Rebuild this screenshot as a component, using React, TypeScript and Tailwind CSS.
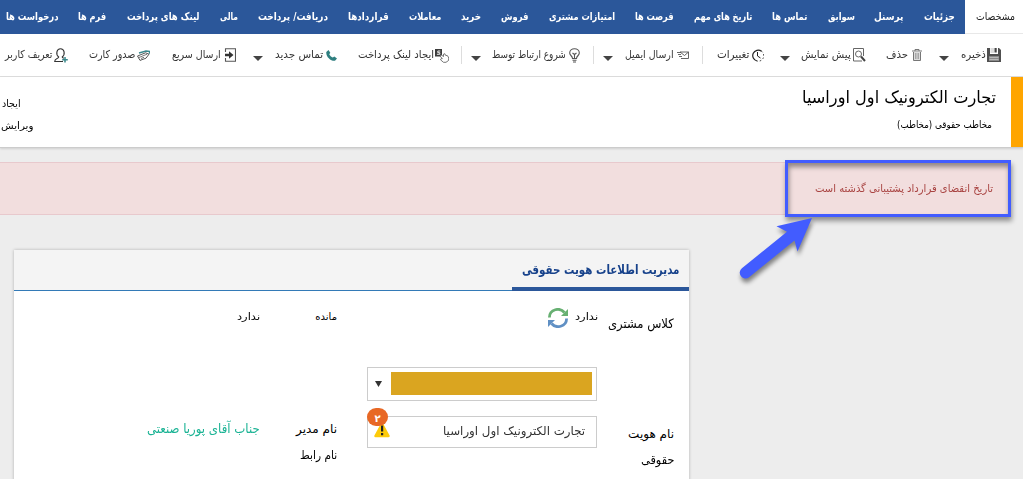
import { useLayoutEffect, useRef, useState, type ReactNode } from "react";

/** Single line of text, condensed horizontally to fill the width of its box. */
function Fit({ children, className = "" }: { children: ReactNode; className?: string }) {
  const box = useRef<HTMLSpanElement>(null);
  const inner = useRef<HTMLSpanElement>(null);
  const [scale, setScale] = useState(1);
  useLayoutEffect(() => {
    if (box.current && inner.current && inner.current.offsetWidth > 0) {
      setScale(box.current.clientWidth / inner.current.offsetWidth);
    }
  }, [children]);
  return (
    <span ref={box} className={`block shrink-0 whitespace-nowrap ${className}`}>
      <span ref={inner} className="inline-block origin-right" style={{ transform: `scaleX(${scale})` }}>
        {children}
      </span>
    </span>
  );
}

const tabs: [string, string][] = [
  ["جزئیات", "w-[31px]"],
  ["پرسنل", "w-[29px]"],
  ["سوابق", "w-[27px]"],
  ["تماس ها", "w-[35px]"],
  ["تاریخ های مهم", "w-[58px]"],
  ["فرصت ها", "w-[39px]"],
  ["امتیازات مشتری", "w-[66px]"],
  ["فروش", "w-[27px]"],
  ["خرید", "w-[20px]"],
  ["معاملات", "w-[32px]"],
  ["قراردادها", "w-[41px]"],
  ["دریافت/ پرداخت", "w-[70px]"],
  ["مالی", "w-[18px]"],
  ["لینک های پرداخت", "w-[73px]"],
  ["فرم ها", "w-[28px]"],
  ["درخواست ها", "w-[53px]"],
];

const SaveIcon = () => (
  <svg className="h-[14px] w-[14px] shrink-0" viewBox="0 0 14 14">
    <path d="M0 0h3v6h8V0h1l2 2v12H0z" fill="#505050" />
    <path d="M3.500 0H7v5H3.500z" fill="#ddd" />
    <path d="M7.500 0h2.200v4.500H7.500z" fill="#444" />
    <path d="M2 8h10v5H2z" fill="#8a8a8a" />
    <path d="M2.500 9.500h9M2.500 11.500h9" stroke="#c4c4c4" strokeWidth=".8" />
  </svg>
);
const TrashIcon = () => (
  <svg className="h-[12px] w-[10px] shrink-0" viewBox="0 0 10 12" fill="none" stroke="#777">
    <path d="M1.500 3v8.500h7V3" fill="#ddd" />
    <path d="M0 2h10M3 2V.5h4V2" />
    <path d="M3.500 4v6M5 4v6M6.500 4v6" stroke="#999" strokeWidth=".8" />
  </svg>
);
const PreviewIcon = () => (
  <svg className="h-[14px] w-[14px] shrink-0" viewBox="0 0 14 14" fill="none" stroke="#666">
    <path d="M11.500 8V.5H1.500v12.500H10" />
    <circle cx="6.500" cy="6" r="3" />
    <path d="m9 8.500 4 4.500" stroke="#444" strokeWidth="2" />
  </svg>
);
const ClockIcon = () => (
  <svg className="h-[13px] w-[12px] shrink-0" viewBox="0 0 12 13" fill="none" stroke="#222">
    <path d="M5 12A5.500 5.500 0 1 1 9.500 2.200" strokeWidth="1.200" />
    <path d="M9.500 2.200A5.500 5.500 0 0 1 5 12" strokeDasharray="1.500 2" />
    <path d="M5.500 3v4l3 2" />
  </svg>
);
const MailIcon = () => (
  <svg className="h-[8px] w-[12px] shrink-0" viewBox="0 0 12 8" fill="none" stroke="#555" strokeWidth=".9">
    <path d="M3 1h8.500v6.500H4M3 1l4.500 3.500L11.500 1M0 1.500h4M1 3.500h3M2 5.500h3" />
  </svg>
);
const BulbIcon = () => (
  <svg className="h-[15px] w-[11px] shrink-0" viewBox="0 0 11 15" fill="none" stroke="#555" strokeWidth="1.100">
    <path d="M3.500 10.500C3.500 8 .7 7.500.7 5a4.800 4.300 0 0 1 9.600 0c0 2.500-2.800 3-2.800 5.500zM3.500 12.300h4M4 14h3M3.500 5l2 1.500 2-1.500M5.500 6.500v4" />
  </svg>
);
const LinkPayIcon = () => (
  <svg className="h-[15px] w-[14px] shrink-0" viewBox="0 0 14 15" fill="none">
    <path d="M0 1h7v7.500H0z" fill="#3c3c3c" />
    <path d="M5.300 3H2.800v1.700h2v1.600H1.900" stroke="#fff" strokeWidth=".9" />
    <path d="m5 8 1-1.200 2.500 1.700V6.200l1.300-.5.7 1.600 2 .4 1.300 2.300-.3 2.500L11 14.300H8.500L5.500 11.800l.6-1.100h1.200z" fill="#fff" stroke="#555" strokeWidth=".8" />
  </svg>
);
const PhoneIcon = () => (
  <svg className="h-[11px] w-[11px] shrink-0" viewBox="0 0 11 11">
    <path d="M2.500 0 4.300 2.700 3.300 4.200c.6 1.500 2 2.800 3.500 3.400l1.500-1L11 8.500 9 10.800C4.500 11.200-.2 6.500.3 2z" fill="#2f7f80" />
  </svg>
);
const SendIcon = () => (
  <svg className="h-[14px] w-[12px] shrink-0" viewBox="0 0 12 14" fill="none">
    <path d="M1.500 4V.7h10v12.600h-10V10" stroke="#555" strokeWidth="1.100" />
    <path d="M1 5.700h4V3.200L9.500 7 5 10.800V8.300H1z" fill="#333" />
  </svg>
);
const CardIcon = () => (
  <svg className="h-[11px] w-[13px] shrink-0" viewBox="0 0 13 11" fill="none" strokeWidth=".9">
    <path d="m2 3 7-2 3.500.3v2.500" stroke="#39878b" strokeWidth="1.400" />
    <path d="m.5 6 8-3.200 3.500 1.400-3 4-6 2.200z" fill="#fff" stroke="#444" />
    <path d="m1.500 7.700 8.500-3.500M4 8.500l3-1.200" stroke="#666" />
  </svg>
);
const UserIcon = () => (
  <svg className="h-[15px] w-[14px] shrink-0" viewBox="0 0 14 15" fill="none">
    <path d="M9 13.500H.7c0-3.500 4-2.500 4-4.500C1.500 6.500 2.500.8 6.500.8s5 5.700 1.700 8.200c0 .8.800 1 1.700 1.300" stroke="#333" strokeWidth="1.100" />
    <path d="M11 9v5.500M8.200 11.700h5.600" stroke="#39878b" strokeWidth="1.500" />
  </svg>
);

const Caret = ({ className }: { className: string }) => (
  <svg className={`mt-[7px] h-[5px] w-[10px] shrink-0 ${className}`} viewBox="0 0 10 5">
    <path d="M0 0h10L5 5z" fill="#444" />
  </svg>
);
const Sep = ({ className }: { className: string }) => (
  <span className={`h-[18px] w-px shrink-0 bg-[#ddd] ${className}`} />
);

function Tool({ icon, label, gap, inner, width }: { icon: ReactNode; label: string; gap: string; inner: string; width: string }) {
  return (
    <div className={`flex shrink-0 items-center ${gap} ${inner}`}>
      {icon}
      <Fit className={`${width} text-[11px] leading-[18px]`}>{label}</Fit>
    </div>
  );
}

function Toolbar() {
  return (
    <div className="flex h-[43px] shrink-0 items-center border-b border-[#ddd] bg-white text-[#333]">
      <Tool icon={<SaveIcon />} label="ذخیره" gap="ms-[22px]" inner="gap-px" width="w-[25px]" />
      <Caret className="ms-[12px]" />
      <Tool icon={<TrashIcon />} label="حذف" gap="ms-[17px]" inner="gap-[4px]" width="w-[22px]" />
      <Tool icon={<PreviewIcon />} label="پیش نمایش" gap="ms-[20px]" inner="gap-px" width="w-[50px]" />
      <Caret className="ms-[11px]" />
      <Tool icon={<ClockIcon />} label="تغییرات" gap="ms-[16px]" inner="gap-[3px]" width="w-[33px]" />
      <Sep className="ms-[13px]" />
      <Tool icon={<MailIcon />} label="ارسال ایمیل" gap="ms-[13px]" inner="gap-[3px]" width="w-[49px]" />
      <Caret className="ms-[12px]" />
      <Sep className="ms-[9px]" />
      <Tool icon={<BulbIcon />} label="شروع ارتباط توسط" gap="ms-[13px]" inner="gap-[3px]" width="w-[74px]" />
      <Caret className="ms-[11px]" />
      <Sep className="ms-[9px]" />
      <Tool icon={<LinkPayIcon />} label="ایجاد لینک پرداخت" gap="ms-[12px]" inner="gap-px" width="w-[76px]" />
      <Tool icon={<PhoneIcon />} label="تماس جدید" gap="ms-[21px]" inner="gap-[3px]" width="w-[48px]" />
      <Caret className="ms-[12px]" />
      <Tool icon={<SendIcon />} label="ارسال سریع" gap="ms-[17px]" inner="gap-[3px]" width="w-[49px]" />
      <Tool icon={<CardIcon />} label="صدور کارت" gap="ms-[22px]" inner="gap-[2px]" width="w-[47px]" />
      <Tool icon={<UserIcon />} label="تعریف کاربر" gap="ms-[20px]" inner="gap-[2px]" width="w-[47px]" />
    </div>
  );
}

const RefreshIcon = () => (
  <svg className="h-[20px] w-[20px] shrink-0" viewBox="0 0 20 20" fill="none" strokeWidth="2.800">
    <path d="M1.400 9.500C1.500 1 12-1 16.500 4.500" stroke="#67b072" />
    <path d="M20 1v7h-7z" fill="#67b072" />
    <path d="M18.600 10.500C18.500 19 8 21 3.500 15.500" stroke="#6090c4" />
    <path d="M0 19v-7h7z" fill="#6090c4" />
  </svg>
);

function Callout() {
  return (
    <>
      <div className="absolute left-[785px] top-[160px] h-[57px] w-[226px] border-[3px] border-[#425cff] shadow-[1px_4px_5px_rgba(0,0,0,0.4),inset_1px_4px_5px_rgba(0,0,0,0.4)]" />
      <svg className="absolute left-[730px] top-[210px] h-[80px] w-[95px] drop-shadow-[1px_4px_2px_rgba(0,0,0,0.45)]" viewBox="0 0 95 80">
        <path d="M82 8 46.500 16.300 57 21.800 11.900 58.200a5.700 5.700 0 0 0 7.200 9L64.500 30.500 67.500 41.500z" fill="#425cff" />
      </svg>
    </>
  );
}

export default function App() {
  return (
    <div dir="rtl" className="relative flex h-[479px] w-[1023px] flex-col overflow-hidden bg-[#ededed] font-['DejaVu_Sans',sans-serif] text-black">
      <nav className="flex h-[34px] shrink-0 bg-[#2b579a] text-[10.500px] font-bold leading-[32px] text-white">
        <div className="w-[58px] shrink-0 border-b border-[#e8e8e8] bg-white ps-2 font-normal text-[#222]">
          <Fit className="w-[39px]">مشخصات</Fit>
        </div>
        {tabs.map(([label, width]) => (
          <div key={label} className="shrink-0 px-[10.100px]">
            <Fit className={width}>{label}</Fit>
          </div>
        ))}
      </nav>
      <Toolbar />
      <header className="flex h-[71px] shrink-0 border-b border-[#ccc] bg-white shadow-[0_1px_2px_rgba(0,0,0,0.12)]">
        <div className="w-[12px] shrink-0 bg-[#ffa500]" />
        <div className="ms-[15px] flex flex-col pt-[7px]">
          <Fit className="w-[194px] text-[17px] leading-[26px]">تجارت الکترونیک اول اوراسیا</Fit>
          <Fit className="ms-1 mt-[5px] w-[95px] text-[10px] leading-[20px]">مخاطب حقوقی (مخاطب)</Fit>
        </div>
        <div className="ms-auto flex w-[33px] flex-col pt-[17px] text-[10px] leading-[20px]">
          <Fit className="ms-[12px] w-[19px]">ایجاد</Fit>
          <Fit className="mt-[2px] w-[32px]">ویرایش</Fit>
        </div>
      </header>
      <div className="ms-[13px] mt-[14px] flex h-[53px] shrink-0 items-center border-y border-[#e8c9cd] bg-[#f2dede] ps-[17px] text-[#a94442]">
        <Fit className="w-[178px] text-[11px] leading-[20px]">تاریخ انقضای قرارداد پشتیبانی گذشته است</Fit>
      </div>
      <section className="ms-[334px] mt-[35px] h-[240px] w-[675px] shrink-0 bg-white shadow-[0_0_3px_rgba(0,0,0,0.25)]">
        <div className="flex h-[41px] border-b border-[#337ab7] bg-[#f4f4f4]">
          <div className="h-[41px] w-[177px] border-b-[4px] border-[#2b579a] ps-[10px] text-[#17428b]">
            <Fit className="w-[158px] text-[13px] font-bold leading-[40px]">مدیریت اطلاعات هویت حقوقی</Fit>
          </div>
        </div>
        <div className="flex">
          <div className="w-[322px]">
            <div className="flex h-[76px] ps-[15px]">
              <Fit className="mt-[23px] w-[66px] text-[13px] leading-[20px]">کلاس مشتری</Fit>
              <Fit className="ms-[10px] mt-[16px] w-[23px] text-[10px] leading-[20px]">ندارد</Fit>
              <div className="ms-[7px] mt-[17px]"><RefreshIcon /></div>
            </div>
            <div className="ms-[92px] flex h-[34px] w-[230px] items-start border border-[#ccc] ps-[4px] pt-[4px]">
              <div className="h-[23px] w-[201px] bg-[#daa520]" />
              <svg className="ms-[9px] mt-[9px] h-[6px] w-[7px]" viewBox="0 0 7 6"><path d="M0 0h7L3.500 6z" fill="#333" /></svg>
            </div>
            <div className="mt-[15px] flex ps-[15px]">
              <div className="w-[77px] text-[12px] leading-[26px]">
                <Fit className="mt-[5px] w-[46px]">نام هویت</Fit>
                <Fit className="w-[33px]">حقوقی</Fit>
              </div>
              <div className="relative h-[32px] w-[230px] border border-[#ccc] ps-[11px] text-[#333]">
                <Fit className="w-[142px] text-[12px] leading-[29px]">تجارت الکترونیک اول اوراسیا</Fit>
                <svg className="absolute left-[6px] top-[5px] h-[16px] w-[16px]" viewBox="0 0 16 16">
                  <path d="M8 2 14.500 14h-13z" fill="#fdcb0a" stroke="#fdcb0a" strokeWidth="2.500" strokeLinejoin="round" />
                  <path d="M7 3.500h2.200V9.500H7zM7 11h2.200v2.200H7z" fill="#222" />
                </svg>
                <span className="absolute left-[-1px] top-[-9px] flex h-[18px] w-[21px] items-center justify-center rounded-[9px] bg-[#e86825] pt-[3px] text-[10px] font-bold leading-none text-white">۲</span>
              </div>
            </div>
          </div>
          <div className="ms-[30px] w-[200px]">
            <div className="flex h-[122px] pt-[16px] text-[10px] leading-[20px]">
              <Fit className="w-[22px]">مانده</Fit>
              <Fit className="ms-[55px] w-[23px]">ندارد</Fit>
            </div>
            <div className="flex text-[12px] leading-[26px]">
              <div className="w-[77px]">
                <Fit className="mt-[3px] w-[41px]">نام مدیر</Fit>
                <Fit className="w-[37px]">نام رابط</Fit>
              </div>
              <Fit className="mt-[3px] w-[113px] text-[13px] text-[#1ab394]">جناب آقای پوریا صنعتی</Fit>
            </div>
          </div>
        </div>
      </section>
      <Callout />
    </div>
  );
}
